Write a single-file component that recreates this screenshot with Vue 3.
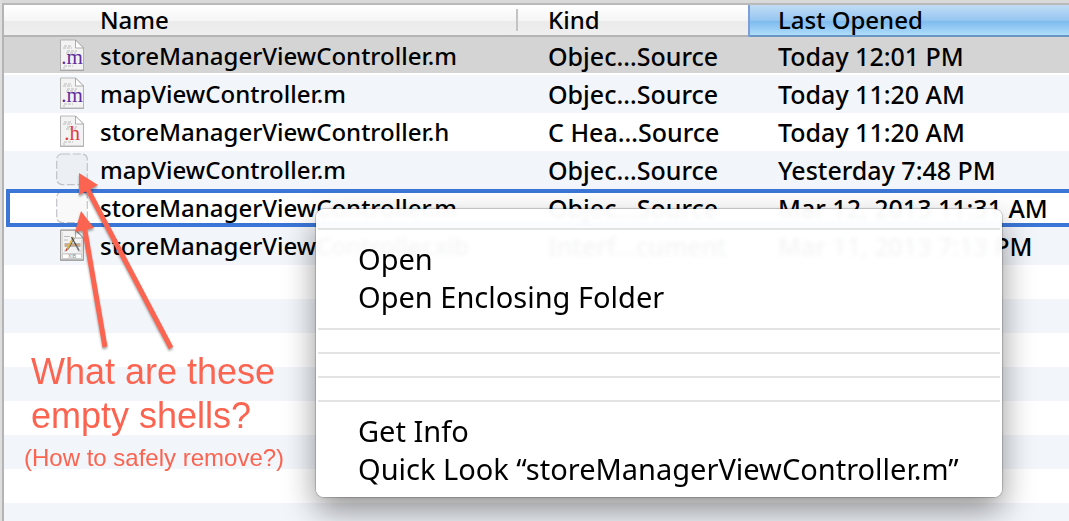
<script setup>
const columns = [
  { key: 'name', label: 'Name' },
  { key: 'kind', label: 'Kind' },
  { key: 'opened', label: 'Last Opened' },
]

const files = [
  { name: 'storeManagerViewController.m', kind: 'Objec…Source', opened: 'Today 12:01 PM', icon: 'm', state: 'selected' },
  { name: 'mapViewController.m', kind: 'Objec…Source', opened: 'Today 11:20 AM', icon: 'm', state: '' },
  { name: 'storeManagerViewController.h', kind: 'C Hea…Source', opened: 'Today 11:20 AM', icon: 'h', state: '' },
  { name: 'mapViewController.m', kind: 'Objec…Source', opened: 'Yesterday 7:48 PM', icon: 'empty', state: '' },
  { name: 'storeManagerViewController.m', kind: 'Objec…Source', opened: 'Mar 12, 2013 11:31 AM', icon: 'empty', state: 'target' },
  { name: 'storeManagerViewController.xib', kind: 'Interf…cument', opened: 'Mar 11, 2013 7:13 PM', icon: 'xib', state: '' },
]

const menu = [
  '-', 'Open', 'Open Enclosing Folder', '-', '-', '-', '-',
  'Get Info', 'Quick Look “storeManagerViewController.m”',
]
</script>

<template>
  <main class="window">
    <div class="topbar"></div>
    <table class="files">
      <colgroup>
        <col class="col-name" />
        <col class="col-kind" />
        <col />
      </colgroup>
      <thead>
        <tr>
          <th v-for="c in columns" :key="c.key" :class="c.key" scope="col">
            <button type="button">{{ c.label }}</button>
          </th>
        </tr>
      </thead>
      <tbody>
        <tr v-for="(f, i) in files" :key="i" :class="f.state">
          <td class="name">
            <div class="file">
              <svg class="icon" viewBox="0 0 32 34" aria-hidden="true">
                <rect v-if="f.icon === 'empty'" x="0.7" y="1" width="30.6" height="30.6" rx="5.500"
                  fill="#808080" fill-opacity=".05" stroke="#c0c2c5" stroke-width="1.200" stroke-dasharray="8 2.500" />
                <g v-else>
                  <path d="M4 2H19.500L28 10.500V32H4Z" fill="#777" opacity=".5" />
                  <path d="M4.500 1H19.500L27.500 9V31H4.500Z" fill="#f3f3f3" stroke="#aaa" stroke-width=".8" />
                  <path d="M19.500 1V9H27.500Z" fill="#fff" stroke="#999" stroke-width=".8" />
                  <g v-if="f.icon === 'xib'">
                    <path d="M4.700 1.200H19.500L27.300 9V31H4.700Z" fill="none" stroke="#999" />
                    <path d="M6.500 3V24.500H25.500V11" fill="none" stroke="#ddd" />
                    <rect x="6.500" y="25" width="19" height="4.500" fill="#fff" stroke="#bbb" stroke-width=".7" />
                    <path d="M8 7.500h6M8 11h4M8 22h2M22 22h3" stroke="#bbb" />
                    <path d="M8.500 16H24.500" stroke="#d9b08b" stroke-width="2" />
                    <path d="M8.500 17.300H24.500M8.500 14.700H24.500" stroke="#777" stroke-width=".6" />
                    <path d="M11 20L17.500 8" stroke="#e0b84a" stroke-width="1.800" />
                    <path d="M12.200 20.500L18.500 9" stroke="#444" stroke-width=".7" />
                    <path d="M10 21.800L11.200 19.600" stroke="#c4453a" stroke-width="1.600" />
                    <path d="M15.500 8L20.500 17" stroke="#444" stroke-width="1.200" />
                    <path d="M20.500 17L23 21.500" stroke="#777" stroke-width="1.600" />
                    <text x="16" y="29.200" text-anchor="middle" class="tag">XIB</text>
                  </g>
                  <g v-else>
                    <path d="M8 7h7M7 9h9M11 12h10M10 14h10M8 27h9M7 29h2" stroke="#aaa" stroke-width=".8" stroke-dasharray="3 1" />
                    <text x="16" y="25" text-anchor="middle" class="glyph" :class="'glyph-' + f.icon">.{{ f.icon }}</text>
                  </g>
                </g>
              </svg>
              <span>{{ f.name }}</span>
            </div>
          </td>
          <td class="kind">{{ f.kind }}</td>
          <td class="opened">{{ f.opened }}</td>
        </tr>
      </tbody>
    </table>
    <div class="stripes"></div>

    <div class="menu" role="menu">
      <template v-for="(item, i) in menu" :key="i">
        <hr v-if="item === '-'" />
        <button v-else type="button" role="menuitem">{{ item }}</button>
      </template>
    </div>

    <svg class="arrows" width="200" height="360" viewBox="0 0 200 360" aria-hidden="true">
      <g class="arrow">
        <path d="M171 348L87 188" />
        <polygon points="79,173 98,185 79,195" />
      </g>
      <g class="arrow">
        <path d="M105 347L84.500 228" />
        <polygon points="81,211 94,228 75,232" />
      </g>
    </svg>
    <div class="note">
      <p class="question">What are these<br />empty shells?</p>
      <p class="aside">(How to safely remove?)</p>
    </div>
  </main>
</template>

<style>
body { margin: 0; }
</style>

<style scoped>
.window {
  position: relative;
  display: flex;
  flex-direction: column;
  box-sizing: border-box;
  min-height: 100vh;
  overflow: hidden;
  border-left: 2px solid #dedede;
  box-shadow: inset 2px 0 #b4b4b4;
  padding-left: 2px;
  background: #fff;
  color: #000;
  font-family: "Noto Sans", "Open Sans", sans-serif;
  font-size: 24px;
  line-height: 32px;
}
.topbar {
  height: 3px;
  margin-left: -4px;
  border-bottom: 2px solid #b9b9b9;
  background: #d9d9d9;
}
.files {
  width: 100%;
  table-layout: fixed;
  border-collapse: collapse;
  white-space: nowrap;
}
.col-name { width: 514px; }
.col-kind { width: 230px; }
th {
  position: relative;
  height: 32px;
  padding: 0;
  box-shadow: inset 0 -2px #b4b4b4;
  background: linear-gradient(#fff, #f5f5f5 50%, #ebebeb 50%, #efefef);
}
th.name::after {
  content: "";
  position: absolute;
  top: 4px;
  right: 0;
  width: 2px;
  height: 22px;
  background: #c4c4c4;
}
th.opened {
  box-shadow: inset 2px 0 #7b9fd6, inset 0 -2px #6796c3;
  background: linear-gradient(#c2dcf5, #93c5f1 50%, #7dbaee 50%, #b6e2fb);
}
th button {
  display: block;
  width: 100%;
  height: 32px;
  padding: 0 0 2px 30px;
  border: 0;
  background: none;
  color: inherit;
  font: inherit;
  font-weight: 500;
  line-height: 28px;
  text-align: left;
}
th.name button { padding-left: 96px; }
td {
  height: 38px;
  padding: 0 0 0 30px;
  font-weight: 500;
}
td.name { padding-left: 52px; }
td.kind, td.opened { font-size: 25px; }
tbody tr { position: relative; }
tbody tr:nth-child(even) { background: #f2f5fa; }
tbody tr.selected {
  background: #d4d4d4;
  box-shadow: inset 0 -2px #fff;
}
tr.target .name::after {
  content: "";
  position: absolute;
  inset: 0 -4px 0 2px;
  border: 4px solid #3b76d6;
}
.file {
  display: flex;
  align-items: center;
  gap: 12px;
}
.icon {
  flex: none;
  width: 32px;
  height: 34px;
}
.glyph { font: 21px "Liberation Serif", serif; }
.glyph-m { fill: #5f2f9c; }
.glyph-h { fill: #e03c3c; }
.tag { font: 5px "Liberation Sans", sans-serif; fill: #888; }
.stripes {
  flex: 1;
  background: repeating-linear-gradient(#fff 0 34px, #f2f5fa 34px 68px);
}
.menu {
  position: absolute;
  top: 209px;
  left: 314px;
  box-sizing: border-box;
  width: 686px;
  padding: 8px 0;
  border-radius: 8px;
  background: rgba(255, 255, 255, .96);
  backdrop-filter: blur(2px);
  box-shadow: 0 0 1px 1px rgba(0, 0, 0, .2), 0 14px 32px rgba(0, 0, 0, .42);
  font-size: 29px;
}
.menu hr {
  height: 2px;
  margin: 0 2px;
  padding: 0;
  border: solid transparent;
  border-width: 11px 0;
  background: #e2e3e3;
  background-clip: padding-box;
}
.menu button {
  display: block;
  width: 100%;
  height: 38px;
  padding: 0 0 2px 42px;
  border: 0;
  background: none;
  color: #000;
  font: inherit;
  line-height: 36px;
  text-align: left;
  white-space: nowrap;
}
.arrows {
  position: absolute;
  top: 0;
  left: -2px;
}
.arrow {
  fill: #fa6450;
  filter: drop-shadow(0 2px 1px rgba(0, 0, 0, .35));
}
.arrow path { stroke: #fa6450; stroke-width: 5; }
.note {
  position: absolute;
  top: 350px;
  left: 22px;
  color: #fa6450;
  font-family: "Liberation Sans", Helvetica, sans-serif;
  white-space: nowrap;
}
.note p { margin: 0; }
.question {
  padding-left: 7px;
  font-size: 36px;
  line-height: 44px;
}
.aside {
  font-size: 24px;
  line-height: 40px;
}
</style>
